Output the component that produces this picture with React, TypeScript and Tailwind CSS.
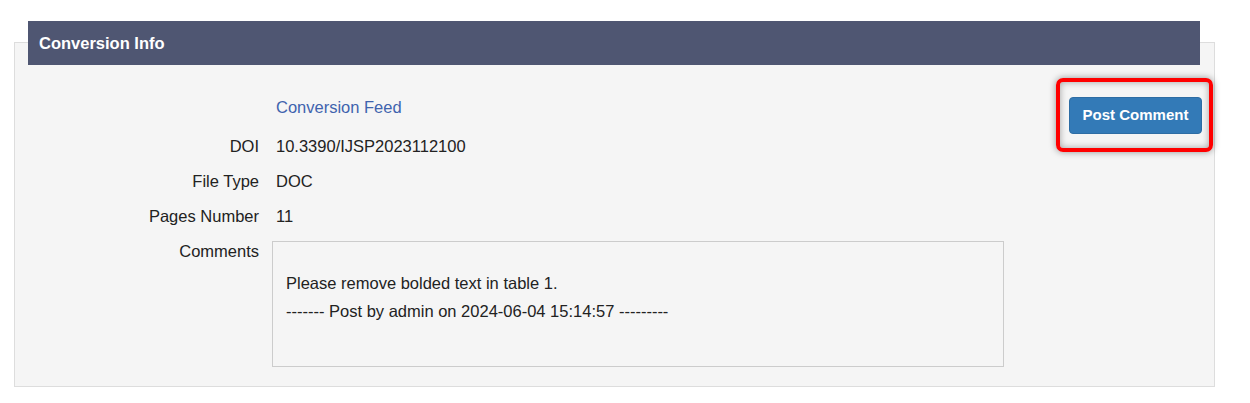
export default function App() {
  const rows = [
    { label: "DOI", value: "10.3390/IJSP2023112100" },
    { label: "File Type", value: "DOC" },
    { label: "Pages Number", value: "11" },
  ];

  return (
    <div className="w-[1250px] h-[403px] bg-white pt-[42px] pl-[14px] pr-[35px] font-['Liberation_Sans',Arial,sans-serif] text-[16.5px] text-[#222]">
      <div className="border border-[#dddddd] bg-[#f5f5f5] pb-[19px]">
        <div className="-mt-[22px] ml-[13px] mr-[14px] h-[44px] bg-[#4f5672] flex items-center pl-[11px]">
          <h3 className="text-white font-bold text-[16.5px]">Conversion Info</h3>
        </div>

        <div className="flex">
          <div className="flex-1 pt-[32px]">
            <div className="flex leading-[20px]">
              <div className="w-[244px]" />
              <a href="#" className="pl-[17px] text-[#3f63ae]">
                Conversion Feed
              </a>
            </div>

            <div className="mt-[19px] flex flex-col gap-[15px]">
              {rows.map((row) => (
                <div key={row.label} className="flex leading-[20px]">
                  <div className="w-[244px] text-right">{row.label}</div>
                  <div className="pl-[17px]">{row.value}</div>
                </div>
              ))}

              <div className="flex">
                <div className="w-[244px] text-right leading-[20px]">Comments</div>
                <div className="ml-[13px] w-[732px] h-[126px] border border-[#cccccc] bg-[#f5f5f5] pt-[27px] pl-[13px] leading-[28px]">
                  <p>Please remove bolded text in table 1.</p>
                  <p>------- Post by admin on 2024-06-04 15:14:57 ---------</p>
                </div>
              </div>
            </div>
          </div>

          <div className="pt-[32px] pr-[12px]">
            <div className="relative">
              <button className="w-[133px] h-[37px] rounded-[4px] bg-[#337ab7] border border-[#2e6da4] text-white font-bold text-[15px]">
                Post Comment
              </button>
              <div className="absolute -left-[13px] -top-[19px] -right-[11px] -bottom-[18px] rounded-[7px] border-[4px] border-[#ff0000] shadow-[0_0_7px_rgba(0,0,0,0.4),inset_0_0_7px_rgba(0,0,0,0.35)]" />
            </div>
          </div>
        </div>
      </div>
    </div>
  );
}
